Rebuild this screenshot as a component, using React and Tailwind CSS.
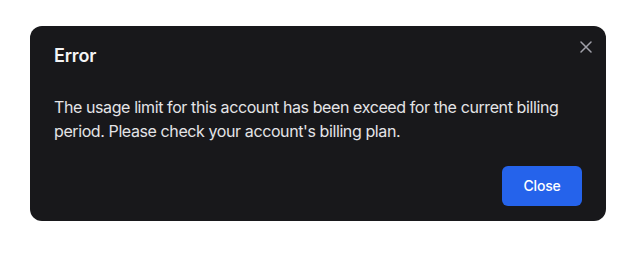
export default function App() {
  return (
    <div className="min-h-[256px] bg-white pl-[30px] pt-[26px] font-['Inter',sans-serif]">
      <div className="relative w-[576px] rounded-xl bg-[#18181b] px-6 pb-[15px] pt-4">
        <button className="absolute right-[14px] top-[15px] flex text-[#a1a1aa]" aria-label="Close">
          <svg width="12" height="12" viewBox="0 0 12 12" fill="none" stroke="currentColor" strokeWidth="1.5" strokeLinecap="round">
            <path d="M1 1L11 11M11 1L1 11" />
          </svg>
        </button>
        <h2 className="text-lg leading-7 font-semibold tracking-[-0.01em] text-[#f4f4f5]">Error</h2>
        <p className="mt-[25px] text-base leading-6 tracking-[-0.025em] text-[#e4e4e7]">
          The usage limit for this account has been exceed for the current billing period. Please check your account's billing plan.
        </p>
        <div className="mt-[23px] flex justify-end">
          <button className="h-10 w-20 rounded-md bg-[#2563eb] text-sm font-medium tracking-[-0.015em] text-white">
            Close
          </button>
        </div>
      </div>
    </div>
  );
}
